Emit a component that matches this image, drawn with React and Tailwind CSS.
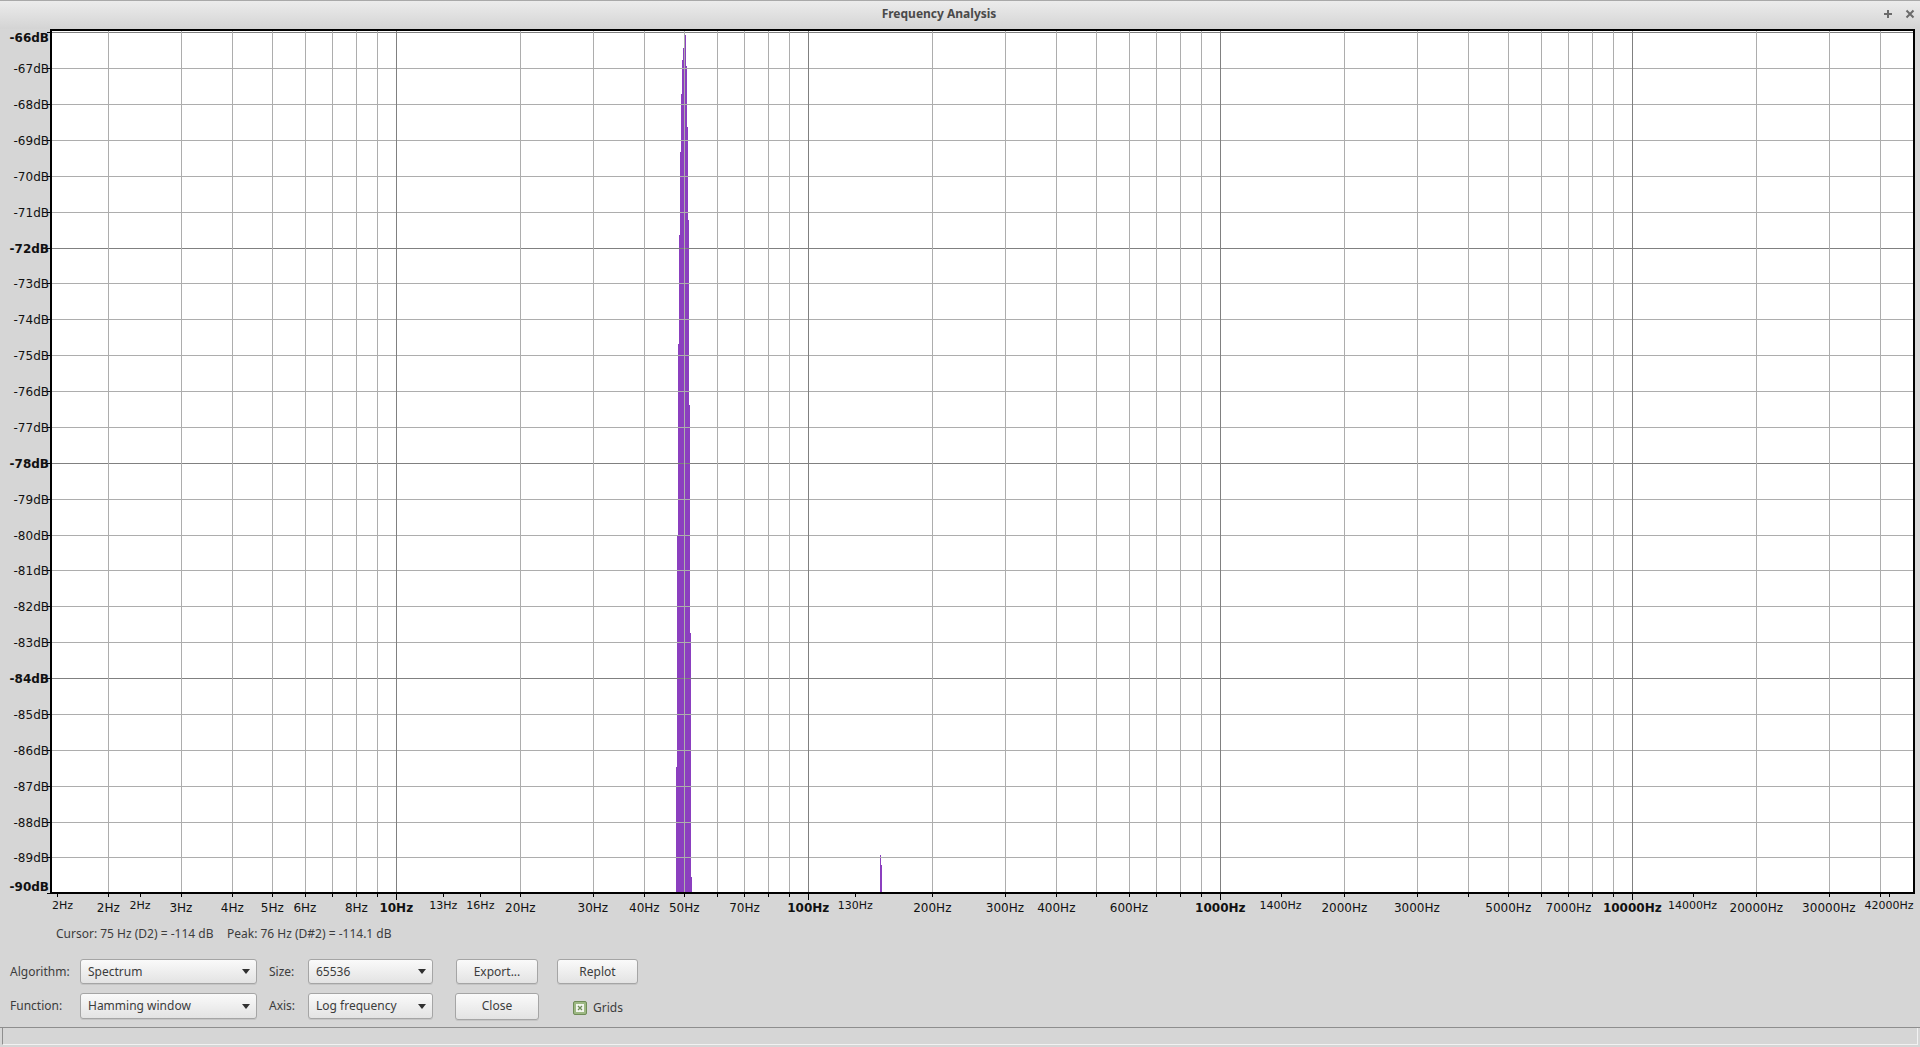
import React from 'react';

// log frequency axis: 10Hz sits at x=396.3, one decade = 412px
const X0 = 396.3;
const DEC = 412;
const fx = (f) => X0 + DEC * Math.log10(f / 10);
const dbY = (db) => 32.3 + (-66 - db) * 35.875;

const PLOT = { left: 52, right: 1913, top: 31, bottom: 892 };

// spectrum columns around 50Hz, [x, top]
const peak = [
  [676, 767], [677, 535], [678, 344], [679, 235], [680, 152], [681, 94],
  [682, 60], [683, 48], [684, 48], [685, 35], [686, 66], [687, 127],
  [688, 220], [689, 405], [690, 633], [691, 877], [880, 855], [881, 865],
];

const hzLabels = [
  { x: 57, t: '2Hz', s: 'small', anchor: 'start', tx: 52 },
  { x: fx(2), t: '2Hz' },
  { x: 140, t: '2Hz', s: 'small' },
  { x: fx(3), t: '3Hz' },
  { x: fx(4), t: '4Hz' },
  { x: fx(5), t: '5Hz' },
  { x: fx(6), t: '6Hz' },
  { x: fx(8), t: '8Hz' },
  { x: fx(10), t: '10Hz', s: 'bold' },
  { x: fx(13), t: '13Hz', s: 'small' },
  { x: fx(16), t: '16Hz', s: 'small' },
  { x: fx(20), t: '20Hz' },
  { x: fx(30), t: '30Hz' },
  { x: fx(40), t: '40Hz' },
  { x: fx(50), t: '50Hz' },
  { x: fx(70), t: '70Hz' },
  { x: fx(100), t: '100Hz', s: 'bold' },
  { x: fx(130), t: '130Hz', s: 'small' },
  { x: fx(200), t: '200Hz' },
  { x: fx(300), t: '300Hz' },
  { x: fx(400), t: '400Hz' },
  { x: fx(600), t: '600Hz' },
  { x: fx(1000), t: '1000Hz', s: 'bold' },
  { x: fx(1400), t: '1400Hz', s: 'small' },
  { x: fx(2000), t: '2000Hz' },
  { x: fx(3000), t: '3000Hz' },
  { x: fx(5000), t: '5000Hz' },
  { x: fx(7000), t: '7000Hz' },
  { x: fx(10000), t: '10000Hz', s: 'bold' },
  { x: fx(14000), t: '14000Hz', s: 'small' },
  { x: fx(20000), t: '20000Hz' },
  { x: fx(30000), t: '30000Hz' },
  { x: fx(42000), t: '42000Hz', s: 'small' },
];

const vLines = [];
for (let n = 0; n <= 4; n++) {
  for (let k = 1; k <= 9; k++) {
    const f = k * Math.pow(10, n);
    const x = fx(f);
    if (x > PLOT.left && x < PLOT.right) vLines.push({ x: Math.round(x) + 0.5, major: k === 1 });
  }
}

const dbs = [];
for (let d = -66; d >= -90; d--) dbs.push(d);

const crisp = (v) => Math.round(v) + 0.5;

function Chart() {
  return (
    <svg width="1920" height="891" viewBox="0 29 1920 891" className="block shrink-0" shapeRendering="crispEdges">
      <rect x={PLOT.left} y={PLOT.top} width={PLOT.right - PLOT.left} height={PLOT.bottom - PLOT.top} fill="#ffffff" />
      {peak.map(([x, top]) => (
        <rect key={x} x={x} y={top} width="1" height={PLOT.bottom - top} fill="#8b3fbf" />
      ))}
      {dbs.map((d) => (
        <line key={d} x1={PLOT.left} x2={PLOT.right} y1={crisp(dbY(d))} y2={crisp(dbY(d))}
          stroke={d % 6 === 0 ? '#808080' : '#adadad'} strokeWidth="1" />
      ))}
      {vLines.map((l) => (
        <line key={l.x} x1={l.x} x2={l.x} y1={PLOT.top} y2={PLOT.bottom}
          stroke={l.major ? '#808080' : '#adadad'} strokeWidth="1" />
      ))}
      {/* frame */}
      <rect x="50" y="29" width="1865" height="2" fill="#000" />
      <rect x="50" y="29" width="2" height="865" fill="#000" />
      <rect x="1913" y="29" width="2" height="865" fill="#000" />
      <rect x="50" y="892" width="1865" height="2" fill="#000" />

      {/* dB ruler */}
      {dbs.map((d) => {
        const y = dbY(d);
        const bold = d % 6 === 0;
        let base = y + 5;
        if (d === -66) base = 41.5;
        if (d === -90) base = 890.5;
        return (
          <g key={d}>
            <line x1="47" x2="50" y1={crisp(y)} y2={crisp(y)} stroke="#000" strokeWidth="1" />
            <text x="49" y={base} textAnchor="end" fontFamily="DejaVu Sans, sans-serif" fontSize="12"
              fontWeight={bold ? 'bold' : 'normal'} fill="#111">
              {d}dB
            </text>
          </g>
        );
      })}

      {/* Hz ruler ticks */}
      {vLines.map((l) => (
        <line key={'t' + l.x} x1={l.x} x2={l.x} y1="894" y2={l.major ? 900 : 897} stroke="#000" strokeWidth="1" />
      ))}
      {hzLabels.filter((l) => l.s === 'small').map((l) => (
        <line key={'s' + l.t + l.x} x1={crisp(l.x)} x2={crisp(l.x)} y1="894" y2="897" stroke="#000" strokeWidth="1" />
      ))}
      {hzLabels.map((l) => (
        <text key={l.t + l.x} x={l.tx ?? l.x} y={l.s === 'small' ? 909 : 912}
          textAnchor={l.anchor ?? 'middle'} fontFamily="DejaVu Sans, sans-serif"
          fontSize={l.s === 'small' ? 11 : 12} fontWeight={l.s === 'bold' ? 'bold' : 'normal'} fill="#111"
          shapeRendering="auto">
          {l.t}
        </text>
      ))}
    </svg>
  );
}

const Caret = () => (
  <svg width="8" height="5" viewBox="0 0 8 5" className="shrink-0">
    <path d="M0 0 H8 L4 5 Z" fill="#303030" />
  </svg>
);

function Combo({ value, w }) {
  return (
    <div className={`${w} h-full flex items-center justify-between pl-[7px] pr-[6px] rounded-[3px] border border-[#a5a5a5] bg-linear-to-b from-[#fafafa] to-[#e3e3e3] shadow-[0_1px_0_rgba(0,0,0,0.08)]`}>
      <span>{value}</span>
      <Caret />
    </div>
  );
}

function Btn({ children, w }) {
  return (
    <div className={`${w} h-full flex items-center justify-center rounded-[3px] border border-[#a5a5a5] bg-linear-to-b from-[#fafafa] to-[#e3e3e3] shadow-[0_1px_0_rgba(0,0,0,0.08)]`}>
      {children}
    </div>
  );
}

export default function App() {
  return (
    <div className="w-[1920px] h-[1047px] overflow-hidden flex flex-col bg-[#d6d6d6] text-[#3c3c3c] text-[12px] font-['Noto_Sans',sans-serif]">
      {/* title bar */}
      <div className="h-[29px] shrink-0 relative flex items-center justify-center border-t border-[#a9a9a9] bg-linear-to-b from-[#ececec] to-[#d4d4d4]">
        <span className="font-bold text-[#4a4a4a] -mt-[2px] mr-[42px]">Frequency Analysis</span>
        <div className="absolute right-[5px] top-[8px] flex items-center gap-[12px]">
          <svg width="10" height="10" viewBox="0 0 10 10">
            <path d="M5 1 V9 M1 5 H9" stroke="#6b6b6b" strokeWidth="2" />
          </svg>
          <svg width="10" height="10" viewBox="0 0 10 10">
            <path d="M1.5 1.5 L8.5 8.5 M8.5 1.5 L1.5 8.5" stroke="#6b6b6b" strokeWidth="2" />
          </svg>
        </div>
      </div>

      <Chart />

      {/* cursor / peak readout */}
      <div className="h-[28px] shrink-0 flex items-center pl-[56px]">
        <span className="w-[171px]">Cursor: 75 Hz (D2) = -114 dB</span>
        <span>Peak: 76 Hz (D#2) = -114.1 dB</span>
      </div>

      {/* controls */}
      <div className="pt-[11px] flex flex-col gap-[9px] shrink-0">
        <div className="h-[25px] flex items-center pl-[10px]">
          <span className="w-[70px]">Algorithm:</span>
          <Combo value="Spectrum" w="w-[177px]" />
          <span className="w-[39px] ml-[12px]">Size:</span>
          <Combo value="65536" w="w-[125px]" />
          <div className="ml-[23px] h-full"><Btn w="w-[82px]">Export...</Btn></div>
          <div className="ml-[19px] h-full"><Btn w="w-[81px]">Replot</Btn></div>
        </div>
        <div className="h-[26px] flex items-center pl-[10px]">
          <span className="w-[70px]">Function:</span>
          <Combo value="Hamming window" w="w-[177px]" />
          <span className="w-[39px] ml-[12px]">Axis:</span>
          <Combo value="Log frequency" w="w-[125px]" />
          <div className="ml-[22px] h-[27px]"><Btn w="w-[84px]">Close</Btn></div>
          <div className="ml-[34px] mt-[4px] flex items-center gap-[6px]">
            <div className="w-[14px] h-[14px] rounded-[2px] border border-[#6f8c57] bg-[#9db883] flex items-center justify-center">
              <div className="w-[8px] h-[8px] bg-[#f2f5ee] flex items-center justify-center">
                <svg width="6" height="6" viewBox="0 0 6 6">
                  <path d="M1 1 L5 5 M5 1 L1 5" stroke="#6f8c57" strokeWidth="1.3" />
                </svg>
              </div>
            </div>
            <span>Grids</span>
          </div>
        </div>
      </div>

      {/* status bar */}
      <div className="mt-[8px] h-[20px] shrink-0 px-[2px] border-t border-[#8e8e8e]">
        <div className="h-[17px] border-l border-[#8e8e8e] border-r border-b border-r-[#f2f2f2] border-b-[#f2f2f2]" />
      </div>
    </div>
  );
}
